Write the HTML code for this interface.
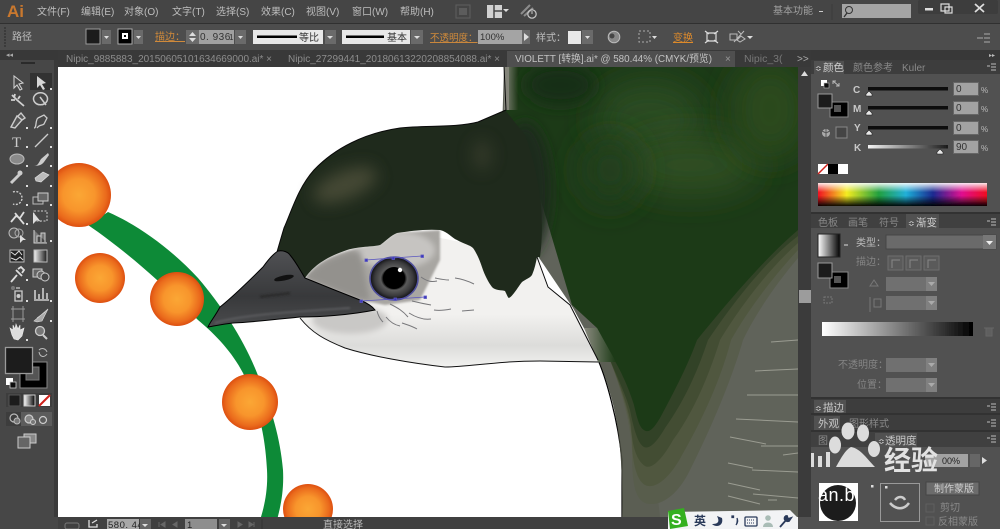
<!DOCTYPE html>
<html><head><meta charset="utf-8"><style>
html,body{margin:0;padding:0;background:#535353;width:1000px;height:529px;overflow:hidden}
svg{display:block}
text{font-family:"Liberation Sans","Noto Sans CJK SC",sans-serif;font-size:10px;fill:#c4c4c4}
.m{fill:#bdbdbd;font-size:10px}
.o{fill:#d08a3a}
.d{fill:#8a8a8a}
.i{stroke:#cfcfcf;stroke-width:1.2;fill:none}
.f{fill:#c8c8c8}
</style></head><body>
<svg width="1000" height="529" viewBox="0 0 1000 529" xmlns="http://www.w3.org/2000/svg">
<defs>
<clipPath id="cv"><rect x="58" y="67" width="740" height="450"/></clipPath>
<radialGradient id="org" cx="50%" cy="50%" r="50%"><stop offset="0" stop-color="#fba735"/><stop offset=".5" stop-color="#f8952c"/><stop offset=".85" stop-color="#ea6a1c"/><stop offset="1" stop-color="#dd4f10"/></radialGradient>
<filter id="b3" x="-100%" y="-100%" width="300%" height="300%"><feGaussianBlur stdDeviation="3"/></filter>
<filter id="b1" x="-50%" y="-50%" width="200%" height="200%"><feGaussianBlur stdDeviation="1"/></filter>
<filter id="b6" x="-150%" y="-150%" width="400%" height="400%"><feGaussianBlur stdDeviation="6"/></filter>
<filter id="b8" x="-150%" y="-150%" width="400%" height="400%"><feGaussianBlur stdDeviation="8"/></filter>
<filter id="b16" x="-200%" y="-200%" width="500%" height="500%"><feGaussianBlur stdDeviation="16"/></filter>
<filter id="s"><feGaussianBlur stdDeviation=".35"/></filter>
<linearGradient id="spec" x1="0" x2="1" y1="0" y2="0"><stop offset="0" stop-color="#f01020"/><stop offset=".17" stop-color="#f4ec20"/><stop offset=".36" stop-color="#20a040"/><stop offset=".52" stop-color="#20b0d8"/><stop offset=".68" stop-color="#1a2a90"/><stop offset=".85" stop-color="#e01090"/><stop offset="1" stop-color="#f01020"/></linearGradient>
<linearGradient id="specv" x1="0" x2="0" y1="0" y2="1"><stop offset="0" stop-color="#fff" stop-opacity=".9"/><stop offset=".4" stop-color="#fff" stop-opacity="0"/><stop offset=".55" stop-color="#000" stop-opacity="0"/><stop offset="1" stop-color="#000" stop-opacity=".95"/></linearGradient>
<linearGradient id="wb" x1="0" x2="1" y1="0" y2="0"><stop offset="0" stop-color="#fff"/><stop offset="1" stop-color="#000"/></linearGradient>
<linearGradient id="kb" x1="0" x2="1" y1="0" y2="0"><stop offset="0" stop-color="#f4f4f4"/><stop offset="1" stop-color="#1a1a1a"/></linearGradient>
<linearGradient id="strip" x1="0" x2="1" y1="0" y2="0"><stop offset="0" stop-color="#84857a"/><stop offset="1" stop-color="#1f3a18"/></linearGradient>
<linearGradient id="strip2" x1="0" x2="1" y1="0" y2="0"><stop offset="0" stop-color="#8b8b80"/><stop offset="1" stop-color="#1c3a16"/></linearGradient>
<linearGradient id="thr" x1="0" x2="0" y1="0" y2="1"><stop offset="0" stop-color="#f2f1ef"/><stop offset=".62" stop-color="#f2f1ef"/><stop offset=".85" stop-color="#dcdcda"/><stop offset="1" stop-color="#f0f0ee"/></linearGradient>
<radialGradient id="iris" cx="50%" cy="50%" r="50%"><stop offset="0" stop-color="#000"/><stop offset=".45" stop-color="#0a0a0a"/><stop offset=".55" stop-color="#5a5a5a"/><stop offset=".8" stop-color="#3a3a3c"/><stop offset="1" stop-color="#0e0e12"/></radialGradient>
<linearGradient id="beak" x1="0" x2="0" y1="0" y2="1"><stop offset="0" stop-color="#505154"/><stop offset=".6" stop-color="#38393b"/><stop offset="1" stop-color="#4a4b4d"/></linearGradient>
</defs>

<!-- chrome backgrounds -->
<rect width="1000" height="529" fill="#4c4c4c"/>
<rect width="1000" height="23" fill="#454545"/>
<rect y="23" width="1000" height="1" fill="#303030"/>
<rect y="24" width="1000" height="26" fill="#4d4d4d"/>
<rect y="50" width="1000" height="17" fill="#393939"/>
<rect x="0" y="50" width="58" height="479" fill="#474747"/>
<rect x="0" y="50" width="58" height="10" fill="#383838"/>
<rect x="54" y="60" width="4" height="457" fill="#3a3a3a"/>

<!-- canvas -->
<rect x="58" y="67" width="740" height="450" fill="#fff"/>
<g clip-path="url(#cv)">
 <!-- green arc -->
 <path d="M108 212 C140 226 172 250 198 278 C222 306 244 340 257 373 C270 405 280 435 283 470 C284 490 281 505 277 520 L260 520 C265 505 268 488 267 470 C265 430 256 400 243 373 C232 352 216 335 198 320 C184 306 170 292 157 280 C135 260 110 240 88 225 Z" fill="#0d8a37"/>
 <circle cx="79" cy="195" r="32" fill="url(#org)"/>
 <circle cx="100" cy="278" r="25" fill="url(#org)"/>
 <circle cx="177" cy="299" r="27" fill="url(#org)"/>
 <circle cx="250" cy="402" r="28" fill="url(#org)"/>
 <circle cx="308" cy="509" r="25" fill="url(#org)"/>

 <!-- grey body -->
 <path d="M504 66 L798 66 L798 517 L622 517 C623 470 620 430 612 400 C606 378 598 355 585 330 L573 308 L500 200 Z" fill="#60635a"/>
 <path d="M598 360 C606 378 618 420 622 460 L622 517" fill="none" stroke="#000" stroke-width="1.2"/>
 <path d="M598 340 L640 340 L660 517 L622 517 C623 470 620 430 612 400 C606 378 600 360 590 340Z" fill="#5a5d50" opacity=".7"/>
 <!-- contour layers -->
 <path d="M798 218 V258 C775 285 755 315 743 340 C733 375 715 420 690 470 C678 495 660 508 645 503 C634 498 632 480 632 450 C630 420 620 385 606 350 L560 200Z" fill="#585d4c"/>
 <path d="M798 218 V250 C770 280 745 315 731 340 C722 375 705 415 682 455 C670 478 655 490 645 485 C636 480 632 460 632 440 C630 415 620 385 606 350 L560 200Z" fill="#50573f"/>
 <path d="M798 218 V243 C765 272 735 315 720 340 C710 372 695 410 673 440 C663 458 652 470 645 466 C636 460 632 445 631 425 C628 405 618 380 606 350 L560 200Z" fill="#434d33"/>
 <path d="M798 218 V236 C760 265 725 315 708 340 C698 370 685 400 665 428 C658 440 650 450 644 447 C638 444 634 430 630 410 C626 395 616 375 606 350 L560 200Z" fill="#324227"/>
 <!-- main green -->
 <path d="M516 66 H798 V230 C760 262 715 318 697 340 C688 365 675 390 660 418 C654 428 650 432 646 431 C640 429 638 422 634 405 C630 392 622 372 613 358 L597 328 L572 305 L520 130 L478 122 L506 110 L516 105 Z" fill="#1c3a17"/>
 <!-- top strip -->
 <rect x="504" y="66" width="14" height="44" fill="url(#strip)"/>
 <!-- grey-to-green fade strip near neck -->
 <path d="M584 328 L597 328 L616 362 L598 362Z" fill="url(#strip2)"/>
 <ellipse cx="650" cy="120" rx="55" ry="40" fill="#2c4c20" filter="url(#b16)"/>
 <ellipse cx="690" cy="165" rx="70" ry="30" fill="#2d4d21" filter="url(#b16)"/>
 <ellipse cx="770" cy="110" rx="40" ry="50" fill="#294a1e" filter="url(#b16)"/>
 <ellipse cx="610" cy="170" rx="30" ry="35" fill="#223f1a" filter="url(#b16)"/>
 <ellipse cx="560" cy="85" rx="35" ry="20" fill="#182e14" filter="url(#b8)"/>
 <ellipse cx="525" cy="190" rx="26" ry="68" fill="#1f2a1c" filter="url(#b6)"/>
 <rect x="504" y="66" width="5" height="44" fill="#84857a"/>
 <!-- lines on body -->
 <g stroke="#a5a69b" stroke-width="1" fill="none" opacity=".85">
  <path d="M771 342 L798 340M755 371 L798 369M747 395 L798 395M736 419 L798 422M730 437 L766 444M761 446 L798 446M728 463 L753 468M752 470 L798 472M728 483 L760 490M753 494 L798 498M728 496 L760 504M768 500 L777 500M783 455 L798 453"/>
 </g>
 <!-- throat / white -->
 <path d="M300 318 C315 335 330 342 345 348 C360 353 390 360 420 364 C445 368 470 365 495 362 C530 360 570 361 598 362 C592 345 582 325 570 305 L548 287 L537 257 L400 230 L320 250 Z" fill="url(#thr)"/>
 <path d="M300 318 C312 333 325 340 345 348 C370 356 410 363 445 367 C470 367 495 361 540 361 L598 362" fill="none" stroke="#111" stroke-width="1"/>
 <!-- grey under beak & around eye -->
 <ellipse cx="350" cy="320" rx="38" ry="14" fill="#c9c8c6" filter="url(#b3)"/>
 <path d="M305 278 C320 260 340 250 380 245 L397 233 L440 230 L440 260 L420 300 L385 305 L360 300Z" fill="#a8a6a2" filter="url(#b1)"/>
 <ellipse cx="395" cy="250" rx="40" ry="19" fill="#d0cfcc" opacity=".75" filter="url(#b3)"/>
 <path d="M305 278 C315 265 335 255 360 250 L370 300 L360 300 Z" fill="#8e8c88" opacity=".8" filter="url(#b3)"/>

 <!-- head dark -->
 <path d="M478 122 C455 128 425 125 400 128 C365 133 335 148 314 170 C298 188 292 210 284 228 C281 238 279 245 277 252 L305 278 C312 268 323 258 347 250 C360 246 372 247 380 245 C386 241 390 236 397 233 C410 231 425 229 440 230 C448 232 452 238 457 240 C464 244 470 245 473 248 C478 255 481 264 483 270 C486 278 490 285 493 288 C498 291 503 290 505 291 C507 295 508 298 509 298 C513 296 518 287 522 282 C526 279 530 278 532 275 C535 268 536 262 537 257 L540 257 C545 220 540 175 525 135 L505 110Z" fill="#1f2a1c"/>
 <path d="M478 122 C455 128 425 125 400 128 C365 133 335 148 314 170 C298 188 292 210 284 228 C281 238 279 245 277 252" fill="none" stroke="#0a0a0a" stroke-width="1"/>
 <path d="M504 66 L506 110 L478 122" fill="none" stroke="#0a0a0a" stroke-width="1"/>
 <ellipse cx="345" cy="185" rx="34" ry="14" transform="rotate(-22 345 185)" fill="#56563f" opacity=".7" filter="url(#b8)"/>
 <ellipse cx="482" cy="155" rx="10" ry="16" fill="#484838" opacity=".45" filter="url(#b8)"/>
 <path d="M537 257 L548 287 L570 305 L598 360" fill="none" stroke="#0a0a0a" stroke-width="1"/>

 <!-- whisker marks -->
 <g stroke="#77777a" stroke-width="1" fill="none">
  <path d="M421 277 C428 282 432 282 437 281M435 278 C440 279 444 280 449 280M455 278 C462 279 468 281 474 284M412 301 C420 303 425 304 431 305M434 310 C440 311 446 310 451 309M462 311 L474 310M390 304 C398 308 403 311 408 317M409 313 C417 318 424 320 431 319M377 311 C378 315 380 319 383 322M386 317 C390 322 395 325 400 326M402 323 C408 325 412 326 417 329"/>
 </g>

 <!-- beak -->
 <path d="M208 327 C210 322 214 318 220 307 C235 295 250 280 263 267 C268 260 273 254 278 251 C283 250 288 252 290 255 C296 262 300 270 305 278 C322 285 342 293 360 300 C367 303 372 306 375 310 C350 315 320 317 300 317 C280 319 255 322 233 323 C223 324 214 326 208 327Z" fill="url(#beak)" stroke="#000" stroke-width="1"/>
 <ellipse cx="284" cy="278" rx="10" ry="2.6" transform="rotate(-12 284 278)" fill="#111"/>
 <path d="M215 323 C240 315 290 312 350 308" stroke="#6a6b6e" stroke-width="1.2" fill="none" filter="url(#b1)"/>
 <path d="M260 297 C270 295 280 295 290 293" stroke="#2a2a2c" stroke-width="2.5" fill="none" filter="url(#b1)"/>

 <!-- eye -->
 <ellipse cx="394" cy="278.500" rx="24" ry="21.500" fill="url(#iris)" stroke="#50509c" stroke-width="1.600"/>
 <circle cx="394" cy="278" r="11" fill="#000"/>
 <circle cx="400" cy="270" r="2.200" fill="#fff"/>
 <!-- selection handles -->
 <g stroke="#5b57c0" stroke-width=".8" fill="#3a36c0">
  <path d="M366 260 L393 258 L422 256M361 301 L395 299 L425 297" fill="none"/>
  <rect x="365" y="259" width="2.500" height="2.500"/><rect x="392" y="257" width="2.500" height="2.500"/><rect x="421" y="255" width="2.500" height="2.500"/>
  <rect x="360" y="300" width="2.500" height="2.500"/><rect x="394" y="298" width="2.500" height="2.500"/><rect x="424" y="296" width="2.500" height="2.500"/>
 </g>
</g>

<!-- top menu -->
<g filter="url(#s)">
<text x="7" y="17" style="font-size:17px;fill:#c9782e;font-weight:bold">Ai</text>
<text class="m" x="37" y="15">文件(F)</text><text class="m" x="81" y="15">编辑(E)</text><text class="m" x="124" y="15">对象(O)</text><text class="m" x="172" y="15">文字(T)</text><text class="m" x="216" y="15">选择(S)</text><text class="m" x="261" y="15">效果(C)</text><text class="m" x="306" y="15">视图(V)</text><text class="m" x="352" y="15">窗口(W)</text><text class="m" x="400" y="15">帮助(H)</text>
<rect x="456" y="5" width="14" height="13" fill="none" stroke="#5f5f5f"/><rect x="459" y="8" width="8" height="7" fill="#5c5c5c"/>
<rect x="487" y="5" width="15" height="13" fill="#d0d0d0"/><path d="M494 5V18M494 11H502" stroke="#444" stroke-width="1.5"/>
<path d="M503 9H509L506 12Z" fill="#ddd"/>
<path d="M521 14 L530 5M524 16 L533 8" stroke="#8c8c8c" stroke-width="2"/>
<circle cx="532" cy="14" r="4.200" fill="none" stroke="#c8c8c8" stroke-width="1.2"/><path d="M532 11V14" stroke="#c8c8c8"/>
<text class="m" x="773" y="14" style="fill:#a0a0a0">基本功能</text><path d="M819 11.500H823" stroke="#ccc"/>
<path d="M832 4V20" stroke="#3a3a3a"/>
<rect x="842" y="4" width="69" height="14" fill="#a4a4a4"/>
<circle cx="849" cy="10" r="3.500" fill="none" stroke="#333"/><path d="M847 13L844 17" stroke="#333" stroke-width="1.300"/>
<rect x="918" y="0" width="80" height="14" rx="2" fill="#3c3c3c"/>
<rect x="925" y="8" width="8" height="2.500" fill="#ddd"/>
<path d="M941 4h8v7h-8zM945 7h7v6h-7z" fill="none" stroke="#ddd" stroke-width="1.200"/>
<path d="M975 4L984 12M984 4L975 12" stroke="#ddd" stroke-width="1.800"/>

<!-- option bar -->
<path d="M5 27V48" stroke="#3a3a3a" stroke-dasharray="2 1" stroke-width="2"/>
<text class="m" x="12" y="40">路径</text>
<rect x="86" y="29" width="14" height="15" fill="#1b1b1b" stroke="#999"/>
<rect x="102" y="30" width="9" height="14" fill="#6a6a6a"/><path d="M104 36H109L106.500 39Z" fill="#ddd"/>
<rect x="118" y="29" width="14" height="15" fill="#000" stroke="#aaa"/><rect x="122" y="33" width="6" height="6" fill="#fff"/><rect x="124" y="35" width="2" height="2" fill="#000"/>
<rect x="134" y="30" width="9" height="14" fill="#6a6a6a"/><path d="M136 36H141L138.500 39Z" fill="#ddd"/>
<text class="o" x="155" y="40" text-decoration="underline">描边：</text>
<rect x="186" y="30" width="13" height="14" fill="#6a6a6a"/><path d="M189 36L192.500 32L196 36ZM189 38H196L192.500 42Z" fill="#ddd"/>
<rect x="199" y="30" width="35" height="14" fill="#a0a0a0"/><text x="200" y="40" style="fill:#333;font-size:10px;letter-spacing:.5px">0. 936</text><text x="229" y="40" style="fill:#333;font-size:8px">1</text>
<rect x="235" y="30" width="11" height="14" fill="#6a6a6a"/><path d="M238 36H243L240.500 39Z" fill="#ddd"/>
<rect x="253" y="30" width="70" height="14" fill="#e8e8e8"/><rect x="257" y="35.500" width="40" height="2.500" fill="#000"/><text x="299" y="41" style="fill:#333">等比</text>
<rect x="325" y="30" width="11" height="14" fill="#6a6a6a"/><path d="M327 36H333L330 39Z" fill="#ddd"/>
<rect x="342" y="30" width="68" height="14" fill="#e8e8e8"/><rect x="346" y="35.500" width="38" height="2.500" fill="#000"/><text x="387" y="41" style="fill:#333">基本</text>
<rect x="411" y="30" width="12" height="14" fill="#6a6a6a"/><path d="M414 36H420L417 39Z" fill="#ddd"/>
<text class="o" x="430" y="41" style="font-size:9.5px" text-decoration="underline">不透明度：</text>
<rect x="478" y="30" width="50" height="14" fill="#a4a4a4"/><text x="480" y="40" style="fill:#333;font-size:9.500px">100%</text>
<rect x="522" y="30" width="8" height="14" fill="#6a6a6a"/><path d="M524 33L529 37L524 41Z" fill="#ddd"/>
<text class="m" x="536" y="41">样式：</text>
<rect x="568" y="31" width="13" height="13" fill="#e8e8e8"/><rect x="582" y="30" width="11" height="14" fill="#6a6a6a"/><path d="M585 36H590L587.500 39Z" fill="#ddd"/>
<circle cx="614" cy="37" r="5.800" fill="#888" stroke="#bbb"/><circle cx="612" cy="36" r="2.500" fill="#444"/>
<rect x="639" y="31" width="11" height="11" fill="none" stroke="#aaa" stroke-dasharray="2 2"/><path d="M652 36H657L654.500 39Z" fill="#ddd"/>
<text class="o" x="673" y="41" text-decoration="underline" style="fill:#dd8a2c">变换</text>
<path d="M707 33H716V41H707ZM705 31L709 34M718 31L714 34M705 43L709 40M718 43L714 40" fill="none" stroke="#ddd" stroke-width="1.200"/>
<path d="M730 34H737V40H730ZM738 31L741 34M737 40L741 36L745 39L740 42ZM734 42L744 31" fill="none" stroke="#bbb"/><path d="M747 36H753L750 39Z" fill="#ddd"/>
<path d="M977 38H983M984 34H990M984 38H990M984 42H990" stroke="#aaa"/>

<!-- tabs -->
<text x="6" y="57" style="font-size:7px;fill:#aaa">◂◂</text>
<text x="66" y="62" textLength="206" lengthAdjust="spacingAndGlyphs" style="font-size:10px;fill:#8d8d8d">Nipic_9885883_20150605101634669000.ai* ×</text>
<text x="288" y="62" textLength="212" lengthAdjust="spacingAndGlyphs" style="font-size:10px;fill:#8d8d8d">Nipic_27299441_20180613220208854088.ai* ×</text>
<rect x="507" y="51" width="228" height="16" fill="#505050"/>
<text x="515" y="62" textLength="197" lengthAdjust="spacingAndGlyphs" style="font-size:10px;fill:#c2c2c2">VIOLETT  [转换].ai* @ 580.44% (CMYK/预览)</text>
<text x="725" y="62" style="font-size:10px;fill:#999">×</text>
<text x="744" y="62" style="font-size:10.500px;fill:#777">Nipic_3(</text>
<text x="797" y="62" style="font-size:10px;fill:#aaa">&gt;&gt;</text>

<!-- scrollbar -->
<rect x="798" y="67" width="13" height="450" fill="#3a3a3a"/>
<path d="M801 76H808L804.500 71Z" fill="#ddd"/>
<rect x="799" y="290" width="12" height="13" fill="#9c9c9c"/>

<!-- toolbox -->
<rect x="21" y="62" width="14" height="2" fill="#2c2c2c"/>
<rect x="30" y="73" width="22" height="17" fill="#333"/>
<g class="i">
 <path d="M14 76V88L17 85L20 90L22 89L19 84L23 83Z" stroke="#ccc" fill="none" stroke-width="1.100"/>
</g>
<path d="M37 76V88L40 85L43 90L45 89L42 84L46 83Z" fill="#d6d6d6"/>
<path d="M12 95L17 100L24 106M15 94L14 98M20 96L18 99M11 100L15 100" stroke="#d0d0d0" stroke-width="1.800" fill="none"/>
<path d="M34 101A7 6 0 1 1 47 101A7 6 0 0 1 34 101M40 97L46 105" stroke="#ccc" stroke-width="1.500" fill="none"/>
<path d="M11 127L17 116L22 120L15 128ZM18 116L21 113L25 118L22 120" stroke="#ccc" stroke-width="1.400" fill="#555"/>
<path d="M34 128C37 128 35 120 38 118L44 115L47 118L44 124C42 126 40 124 37 128" stroke="#ccc" stroke-width="1.300" fill="none"/>
<text x="12" y="147" style="font-size:15px;font-family:'Liberation Serif',serif;fill:#ccc">T</text>
<path d="M35 147L48 134" stroke="#ccc" stroke-width="1.300"/>
<ellipse cx="17" cy="159" rx="7" ry="5" fill="#8a8a8a" stroke="#bbb"/>
<path d="M34 166C38 166 39 162 41 159L48 153L49 155L44 162C42 165 38 166 34 166Z" fill="#ccc"/>
<path d="M11 183L20 174" stroke="#ccc" stroke-width="3"/><circle cx="20" cy="173" r="2.500" fill="#ccc"/>
<path d="M35 178L43 172L49 175L41 182L36 181Z" fill="#bbb" stroke="#ddd" stroke-width=".7"/>
<path d="M13 192A6.500 6.500 0 1 1 13 204" stroke="#ccc" stroke-dasharray="2 1.400" stroke-width="1.400" fill="none"/>
<rect x="33" y="197" width="10" height="7" fill="none" stroke="#bbb"/><rect x="38" y="193" width="10" height="8" fill="#666" stroke="#ccc"/>
<path d="M11 222L16 216L20 218L24 212M15 213L19 218L24 224" stroke="#ddd" stroke-width="1.800" fill="none"/>
<rect x="34" y="211" width="13" height="10" fill="none" stroke="#ccc" stroke-dasharray="2 1.500"/><path d="M33 212V224L37 220L41 222Z" fill="#ddd"/>
<circle cx="14" cy="233" r="5" fill="#555" stroke="#bbb"/><circle cx="19" cy="233" r="4" fill="none" stroke="#aaa"/><path d="M20 235V243L23 240L26 240Z" fill="#ddd"/>
<path d="M34 230V243H47M37 242V236H41V242M41 242V233H45V242" stroke="#ccc" fill="#777"/>
<rect x="10" y="250" width="14" height="12" fill="#222" stroke="#bbb"/><path d="M11 252L15 255L19 251L22 255M11 258L16 260L20 257L23 260" stroke="#ddd" fill="none"/>
<rect x="34" y="250" width="13" height="12" fill="url(#kb)" stroke="#bbb"/>
<path d="M11 282L17 275M16 270L22 276M18 269L21 267L24 270L22 273" stroke="#ddd" stroke-width="1.800" fill="none"/>
<rect x="33" y="269" width="9" height="8" fill="#666" stroke="#ccc"/><circle cx="41" cy="275" r="4" fill="#666" stroke="#ccc"/><circle cx="45" cy="277" r="4" fill="#444" stroke="#ccc"/>
<path d="M15 291H22V301H15ZM16 288H20" stroke="#ccc" stroke-width="1.300" fill="none"/><circle cx="18.500" cy="296" r="2" fill="#ccc"/><circle cx="13" cy="288" r="2" fill="#777"/>
<path d="M35 299V290M39 299V294M43 299V288M47 299V293M34 300H49" stroke="#ccc" stroke-width="1.600"/>
<rect x="13" y="309" width="10" height="10" fill="none" stroke="#bbb"/><path d="M11 309H25M11 319H25M13 306V322M23 306V322" stroke="#999"/>
<path d="M34 321L48 309L42 321L37 322ZM37 318L45 312" fill="#aaa" stroke="#ddd" stroke-width=".6"/>
<path d="M12 335L10 328L13 330L13 325L15 329L16 324L18 329L20 325L20 330L24 328L22 336L18 340L14 339Z" fill="#ddd" stroke="#eee" stroke-width=".6"/>
<circle cx="40" cy="331" r="4.500" fill="#777" stroke="#ccc" stroke-width="1.300"/><path d="M43 335L47 339" stroke="#ccc" stroke-width="2"/>
<g fill="#ddd"><rect x="50" y="88" width="2" height="2"/><rect x="26" y="127" width="2" height="2"/><rect x="50" y="127" width="2" height="2"/><rect x="26" y="146" width="2" height="2"/><rect x="50" y="146" width="2" height="2"/><rect x="26" y="165" width="2" height="2"/><rect x="50" y="165" width="2" height="2"/><rect x="26" y="185" width="2" height="2"/><rect x="50" y="185" width="2" height="2"/><rect x="26" y="204" width="2" height="2"/><rect x="50" y="204" width="2" height="2"/><rect x="26" y="223" width="2" height="2"/><rect x="50" y="240" width="2" height="2"/><rect x="26" y="279" width="2" height="2"/><rect x="26" y="300" width="2" height="2"/><rect x="50" y="300" width="2" height="2"/><rect x="50" y="320" width="2" height="2"/><rect x="26" y="339" width="2" height="2"/></g>
<!-- fill/stroke -->
<rect x="20" y="362" width="27" height="26" fill="#000" stroke="#888"/>
<rect x="26" y="367" width="13" height="13" fill="#555" stroke="#777"/>
<rect x="5.500" y="347.500" width="27" height="26" fill="#1b1b1b" stroke="#9a9a9a" stroke-width="1.300"/>
<path d="M39 350C42 347 46 349 47 352M47 354C44 358 40 357 39 352" stroke="#bbb" fill="none"/>
<rect x="6" y="378" width="7" height="7" fill="#fff"/><rect x="10" y="382" width="6" height="6" fill="#111" stroke="#ccc" stroke-width=".8"/>
<rect x="6" y="393" width="46" height="14" fill="#3c3c3c"/>
<rect x="9" y="395" width="11" height="11" fill="#1a1a1a" stroke="#555"/><rect x="24" y="395" width="11" height="11" fill="url(#wb)" stroke="#ccc"/><rect x="39" y="395" width="11" height="11" fill="#fff"/><path d="M39 406L50 395" stroke="#d0201c" stroke-width="2"/>
<rect x="6" y="412" width="46" height="14" fill="#5c5c5c"/><rect x="6" y="412" width="15" height="14" fill="#3c3c3c"/>
<circle cx="14" cy="418" r="4" fill="none" stroke="#bbb" stroke-width="1.200"/><circle cx="17" cy="421" r="3" fill="#777" stroke="#bbb"/>
<circle cx="29" cy="419" r="4" fill="#888" stroke="#ccc" stroke-width="1.200"/><circle cx="33" cy="422" r="2.500" fill="#777" stroke="#ccc"/><circle cx="43" cy="420" r="3.500" fill="none" stroke="#ccc" stroke-width="1.200"/>
<rect x="24" y="434" width="12" height="9" fill="#888" stroke="#ccc"/><rect x="18" y="437" width="12" height="11" fill="#666" stroke="#ccc"/>

<!-- status -->
<rect x="58" y="517" width="740" height="12" fill="#404040"/>
<rect x="65" y="523" width="14" height="6" rx="2" fill="none" stroke="#777"/>
<path d="M89 520V527H97V524M92 523L97 520" stroke="#ddd" stroke-width="1.300" fill="none"/>
<rect x="107" y="519" width="32" height="10" fill="#a8a8a8"/><text x="108" y="528" style="fill:#222;font-size:9.500px;letter-spacing:.5px">580. 44</text>
<rect x="140" y="519" width="11" height="10" fill="#666"/><path d="M142 524H148L145 527Z" fill="#ddd"/>
<path d="M159 522V527M161 524.500L165 522V527ZM173 524.500L177 522V527Z" stroke="#666" fill="#666"/>
<rect x="185" y="519" width="32" height="10" fill="#8e8e8e"/><text x="187" y="528" style="fill:#222;font-size:9.500px">1</text>
<rect x="219" y="519" width="11" height="10" fill="#666"/><path d="M221 524H227L224 527Z" fill="#ddd"/>
<path d="M238 522L242 524.500L238 527ZM249 522L253 524.500L249 527ZM254 522V527" stroke="#666" fill="#666"/>
<path d="M262 519V529" stroke="#333"/>
<text x="323" y="528" style="fill:#bbb">直接选择</text>

<!-- right panel -->
<rect x="811" y="50" width="189" height="479" fill="#515151"/>
<rect x="811" y="50" width="189" height="10" fill="#383838"/>
<text x="989" y="57" style="font-size:6px;fill:#bbb">▸▸</text>
<rect x="811" y="60" width="189" height="14" fill="#3c3c3c"/>
<rect x="814" y="61" width="30" height="13" fill="#515151"/>
<text x="815" y="71" style="font-size:8px;fill:#ccc">≎</text><text x="823" y="71" style="fill:#d0d0d0;font-size:10.500px">颜色</text>
<text class="d" x="853" y="71">颜色参考</text><text class="d" x="902" y="71">Kuler</text>
<path d="M987 66H990M991 64H996M991 67H996M991 70H996" stroke="#bbb"/>
<!-- CMYK -->
<rect x="821" y="80" width="6" height="6" fill="#fff"/><rect x="824" y="83" width="5" height="5" fill="#111" stroke="#bbb" stroke-width=".6"/>
<path d="M833 81L839 86M836 81H833V84M839 83V86H836" stroke="#bbb" fill="none"/>
<rect x="830" y="102" width="18" height="15" fill="#000" stroke="#888"/><rect x="834" y="105" width="7" height="7" fill="#555"/>
<rect x="818" y="94" width="14" height="14" fill="#1c1c1c" stroke="#9a9a9a"/>
<circle cx="826" cy="133" r="4" fill="#aaa"/><path d="M826 129V137M822 131L826 133L830 131" stroke="#555" fill="none"/>
<rect x="836" y="127" width="11" height="11" fill="#444" stroke="#888"/>
<text x="853" y="93" style="fill:#c8c8c8;font-weight:bold">C</text><text x="853" y="112" style="fill:#c8c8c8;font-weight:bold">M</text><text x="854" y="131" style="fill:#c8c8c8;font-weight:bold">Y</text><text x="854" y="151" style="fill:#c8c8c8;font-weight:bold">K</text>
<rect x="868" y="87" width="80" height="3.500" fill="#101010"/><rect x="868" y="106" width="80" height="3.500" fill="#100808"/><rect x="868" y="126" width="80" height="3.500" fill="#101008"/>
<rect x="868" y="145" width="80" height="3.500" fill="url(#kb)"/>
<g fill="#e8e8e8" stroke="#222" stroke-width=".6"><path d="M869 91L872 94V96H866V94Z"/><path d="M869 110L872 113V115H866V113Z"/><path d="M869 130L872 133V135H866V133Z"/><path d="M940 149L943 152V154H937V152Z"/></g>
<g fill="#a2a2a2" stroke="#666"><rect x="953.500" y="82.500" width="25" height="13"/><rect x="953.500" y="101.500" width="25" height="13"/><rect x="953.500" y="121.500" width="25" height="13"/><rect x="953.500" y="140.500" width="25" height="13"/></g>
<text x="956" y="92" style="fill:#333">0</text><text x="956" y="111" style="fill:#333">0</text><text x="956" y="131" style="fill:#333">0</text><text x="956" y="150" style="fill:#333">90</text>
<text x="981" y="93" style="fill:#bbb;font-size:8px">%</text><text x="981" y="112" style="fill:#bbb;font-size:8px">%</text><text x="981" y="132" style="fill:#bbb;font-size:8px">%</text><text x="981" y="151" style="fill:#bbb;font-size:8px">%</text>
<rect x="818" y="164" width="10" height="10" fill="#fff"/><path d="M818 174L828 164" stroke="#d0201c" stroke-width="1.500"/><rect x="828" y="164" width="10" height="10" fill="#000"/><rect x="838" y="164" width="10" height="10" fill="#fff"/>
<rect x="818" y="183" width="169" height="23" fill="url(#spec)"/><rect x="818" y="183" width="169" height="23" fill="url(#specv)"/>
<!-- panel 2 -->
<rect x="811" y="212" width="189" height="2" fill="#333"/>
<rect x="811" y="214" width="189" height="14" fill="#3f3f3f"/>
<rect x="906" y="214" width="33" height="14" fill="#515151"/>
<text class="d" x="818" y="226">色板</text><text class="d" x="848" y="226">画笔</text><text class="d" x="879" y="226">符号</text>
<text x="908" y="226" style="font-size:8px;fill:#ccc">≎</text><text x="916" y="226" style="fill:#d0d0d0;font-size:10.500px">渐变</text>
<path d="M987 221H990M991 219H996M991 222H996M991 225H996" stroke="#bbb"/>
<rect x="818" y="234" width="22" height="23" fill="url(#wb)" stroke="#222"/>
<path d="M844 245H848" stroke="#ddd"/>
<text x="856" y="246" style="fill:#bdbdbd">类型：</text>
<rect x="886" y="235" width="110" height="14" fill="#6a6a6a" stroke="#444"/><rect x="983" y="235" width="13" height="14" fill="#777"/><path d="M986 241H993L989.500 245Z" fill="#eee"/>
<text x="856" y="265" style="fill:#858585">描边：</text>
<g fill="#5a5a5a" stroke="#6e6e6e"><rect x="888" y="256" width="15" height="14"/><rect x="906" y="256" width="15" height="14"/><rect x="924" y="256" width="15" height="14"/></g>
<path d="M892 268V260H900M910 268V260H918M928 268V260H936" stroke="#888" fill="none"/>
<rect x="830" y="272" width="18" height="16" fill="#000" stroke="#888"/><rect x="834" y="276" width="7" height="7" fill="#555"/>
<rect x="818" y="263" width="14" height="15" fill="#1c1c1c" stroke="#9a9a9a"/>
<path d="M870 286L874 280L878 286Z" fill="none" stroke="#777"/>
<g><rect x="886" y="277" width="51" height="14" fill="#707070"/><rect x="926" y="277" width="11" height="14" fill="#808080"/><path d="M928 282H935L931.500 286Z" fill="#aaa"/>
<rect x="886" y="296" width="51" height="14" fill="#707070"/><rect x="926" y="296" width="11" height="14" fill="#808080"/><path d="M928 301H935L931.500 305Z" fill="#aaa"/>
<rect x="886" y="358" width="51" height="14" fill="#707070"/><rect x="926" y="358" width="11" height="14" fill="#808080"/><path d="M928 363H935L931.500 367Z" fill="#aaa"/>
<rect x="886" y="378" width="51" height="14" fill="#707070"/><rect x="926" y="378" width="11" height="14" fill="#808080"/><path d="M928 383H935L931.500 387Z" fill="#aaa"/></g>
<path d="M824 297H832V303H824Z" stroke="#777" fill="none" stroke-dasharray="2 1"/>
<path d="M870 297V312M874 299H881V307H874Z" stroke="#777" fill="none"/>
<rect x="822" y="322" width="151" height="14" fill="url(#wb)"/>
<path d="M984 328H994M986 328V336H992V328" stroke="#666" fill="#5f5f5f"/>
<text x="838" y="368" style="fill:#858585">不透明度：</text>
<text x="857" y="388" style="fill:#858585">位置：</text>
<!-- collapsed panels -->
<rect x="811" y="397" width="189" height="2" fill="#333"/>
<rect x="811" y="399" width="189" height="14" fill="#3c3c3c"/><rect x="814" y="400" width="32" height="13" fill="#515151"/>
<text x="815" y="411" style="font-size:8px;fill:#ccc">≎</text><text x="823" y="411" style="fill:#c8c8c8;font-size:10.500px">描边</text>
<path d="M987 406H990M991 404H996M991 407H996M991 410H996" stroke="#bbb"/>
<rect x="811" y="413" width="189" height="2" fill="#333"/>
<rect x="811" y="415" width="189" height="15" fill="#3c3c3c"/><rect x="814" y="416" width="26" height="14" fill="#515151"/>
<text x="818" y="427" style="fill:#c8c8c8;font-size:10.500px">外观</text><text class="d" x="849" y="427">图形样式</text>
<path d="M987 422H990M991 420H996M991 423H996M991 426H996" stroke="#bbb"/>
<rect x="811" y="430" width="189" height="2" fill="#333"/>
<rect x="811" y="432" width="189" height="15" fill="#3f3f3f"/><rect x="875" y="433" width="42" height="14" fill="#515151"/>
<text class="d" x="818" y="444">图</text>
<text x="878" y="444" style="font-size:8px;fill:#ccc">≎</text><text x="885" y="444" style="fill:#c8c8c8;font-size:10.500px">透明度</text>
<path d="M987 438H990M991 436H996M991 439H996M991 442H996" stroke="#bbb"/>
<!-- transparency -->
<rect x="925" y="454" width="43" height="13" fill="#a2a2a2"/><text x="942" y="464" style="fill:#222;font-size:9px">00%</text>
<rect x="970" y="454" width="10" height="13" fill="#666"/><path d="M982 457L987 460.500L982 464Z" fill="#ddd"/>
<rect x="819" y="483" width="39" height="38" fill="#fff"/><ellipse cx="838" cy="503" rx="18" ry="18" fill="#1a1a1a"/>
<rect x="880.500" y="483.500" width="39" height="38" fill="none" stroke="#999"/>
<rect x="871" y="485" width="2.500" height="2.500" fill="#ddd"/><rect x="885" y="486" width="2.500" height="2.500" fill="#ddd"/>
<path d="M890 503C896 510 904 510 909 503M895 500C898 496 903 496 905 500" stroke="#ccc" stroke-width="2.500" fill="none"/>
<rect x="926" y="482" width="53" height="13" fill="#6c6c6c" stroke="#444"/><text x="934" y="492" style="fill:#d0d0d0;font-size:10px">制作蒙版</text>
<rect x="926" y="504" width="8" height="8" fill="none" stroke="#5f5f5f"/><text x="940" y="511" style="fill:#8a8a8a">剪切</text>
<rect x="926" y="517" width="8" height="8" fill="none" stroke="#5f5f5f"/><text x="938" y="525" style="fill:#8a8a8a;font-size:10px">反相蒙版</text>
</g>
<!-- watermark -->
<g fill="#dcdcdc">
 <ellipse cx="848" cy="431" rx="6.500" ry="8.500"/><ellipse cx="863" cy="433" rx="6" ry="8.500"/><ellipse cx="835" cy="445" rx="6" ry="8.500"/><ellipse cx="874" cy="449" rx="6" ry="8"/>
 <path d="M851 447C860 448 868 460 875 467L836 467C840 460 845 450 851 447Z"/>
 <rect x="811" y="453" width="3" height="14"/><rect x="818" y="456" width="4" height="11"/><rect x="826" y="452" width="4" height="15"/>
</g>
<text x="884" y="470" style="font-size:27px;font-weight:bold;fill:#e2e2e2">经验</text>
<text x="818" y="501" style="font-size:18px;fill:#fff;letter-spacing:.5px">an.b</text>

<!-- sogou bar -->
<path d="M668 512 L790 510 L797 517 L811 517 L811 529 L668 529Z" fill="#f2f3f5"/>
<rect x="798" y="517" width="13" height="12" fill="#515151"/>
<path d="M668 511L684 508L688 526L670 529Z" fill="#34b01f"/>
<text x="671" y="525" style="font-size:16px;font-weight:bold;fill:#fff">S</text>
<text x="694" y="525" style="font-size:12px;fill:#2a3a5a;font-weight:bold">英</text>
<path d="M717 516C720 522 718 524 712 524C716 528 724 526 722 518Z" fill="#2a3a5a"/>
<path d="M732 516h1.500v1.500h-1.500zM737 518C738 521 738 522 736 525" stroke="#2a3a5a" stroke-width="1.300" fill="#2a3a5a"/>
<rect x="745" y="517" width="12" height="9" rx="1" fill="none" stroke="#2a3a5a" stroke-width="1.300"/><path d="M747 520H755M747 523H755" stroke="#2a3a5a" stroke-dasharray="1 1"/>
<circle cx="768" cy="518" r="2.800" fill="#a9bcb6"/><path d="M763 527C763 521 773 521 773 527Z" fill="#a9bcb6"/>
<path d="M780 527L787 519M786 516C783 518 785 522 789 521L791 518L788 519L787 516Z" stroke="#2a3a5a" stroke-width="1.800" fill="#2a3a5a"/>
</svg>
</body></html>
